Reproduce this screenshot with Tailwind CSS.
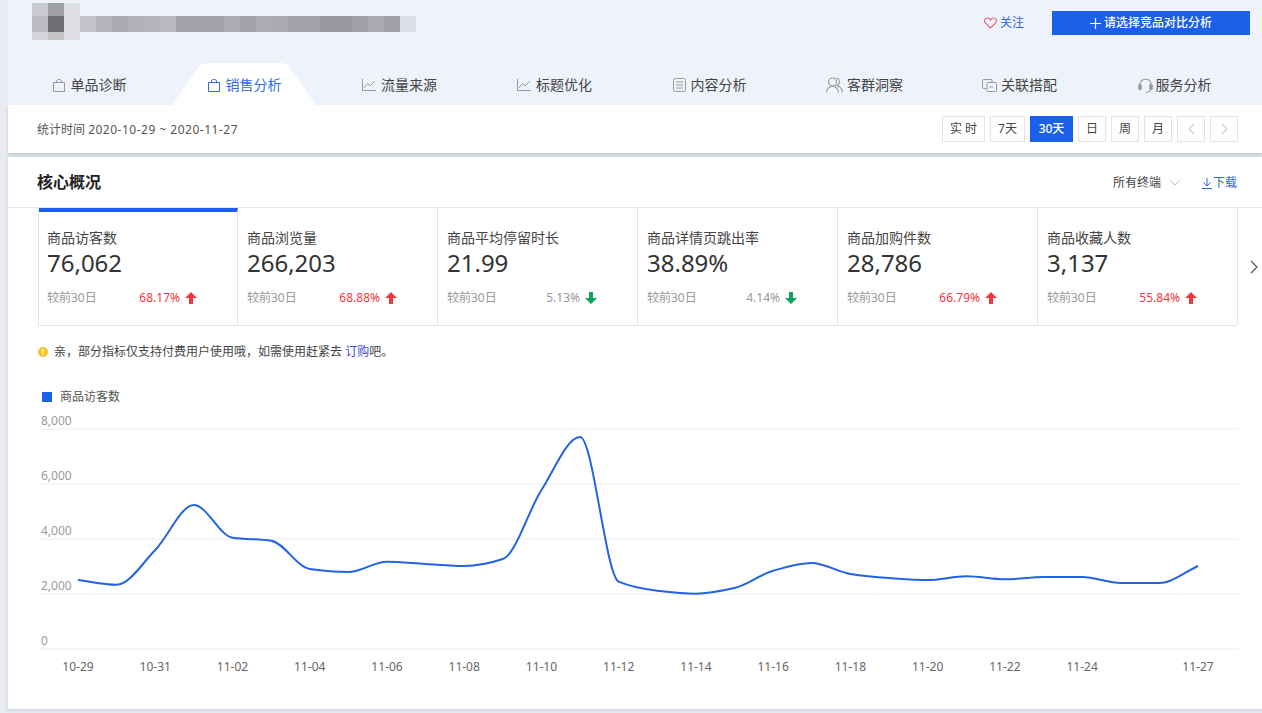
<!DOCTYPE html>
<html lang="zh-CN">
<head>
    <meta charset="UTF-8">
    <title>销售分析</title>
    <script src="https://cdn.jsdelivr.net/npm/@tailwindcss/browser@4"></script>
</head>
<body class="bg-[#e8ebf0] [font-family:'Noto_Sans','Noto_Sans_CJK_SC',sans-serif] text-[#333] text-xs">
<div class="h-[713px] w-[1262px] overflow-hidden pl-[8px]">

    <!-- header -->
    <header class="bg-[#eef3fb] h-[105px] flex flex-col">
        <div class="h-[63px] flex justify-between items-start pr-[12px]">
            <!-- blurred product name -->
            <div class="ml-[24px] mt-[3px] flex flex-col">
                <div class="flex h-[13px]">
                    <div class="w-[16px] bg-[#c9cacd]"></div><div class="w-[16px] bg-[#a0a1a4]"></div><div class="w-[16px] bg-[#dddee3]"></div>
                </div>
                <div class="flex h-[16px]">
                    <div class="w-[16px] bg-[#bbbcc0]"></div><div class="w-[16px] bg-[#6e6f74]"></div><div class="w-[16px] bg-[#dddee3]"></div>
                    <div class="w-[16px] bg-[#c1c3c7]"></div><div class="w-[16px] bg-[#b2b4b8]"></div><div class="w-[16px] bg-[#a9abaf]"></div><div class="w-[16px] bg-[#b1b3b7]"></div><div class="w-[16px] bg-[#b3b5b9]"></div><div class="w-[16px] bg-[#b7b9bd]"></div>
                    <div class="w-[48px] bg-[#a1a3a8]"></div><div class="w-[16px] bg-[#abadb1]"></div><div class="w-[16px] bg-[#a2a3a7]"></div><div class="w-[16px] bg-[#acadb1]"></div><div class="w-[16px] bg-[#a9abb0]"></div><div class="w-[32px] bg-[#a1a2a6]"></div><div class="w-[32px] bg-[#97989c]"></div><div class="w-[16px] bg-[#9fa1a5]"></div><div class="w-[16px] bg-[#a8aaae]"></div><div class="w-[16px] bg-[#a0a1a5]"></div><div class="w-[16px] bg-[#dcdfe8]"></div>
                </div>
                <div class="flex h-[8px]">
                    <div class="w-[16px] bg-[#d5d6d9]"></div><div class="w-[16px] bg-[#c2c3c5]"></div><div class="w-[16px] bg-[#dfe0e4]"></div>
                </div>
            </div>
            <div class="flex items-center mt-[11px] h-[24px]">
                <svg class="w-[13px] h-[12px] mr-[3px]" viewBox="0 0 13 12" fill="none" stroke="#ee5a7e" stroke-width="1.1"><path d="M6.5 11 L1.5 6 C-0.5 3.5 1 1 3.5 1 C5 1 6 2 6.5 3 C7 2 8 1 9.5 1 C12 1 13.5 3.5 11.5 6 Z"/></svg>
                <span class="text-[#2f66e0] mr-[28px]">关注</span>
                <button class="w-[198px] h-[24px] bg-[#1c5fe8] text-white flex items-center justify-center font-medium">
                    <svg class="w-[11px] h-[11px] mr-[3px]" viewBox="0 0 11 11" stroke="#fff" stroke-width="1.2"><path d="M5.5 0 V11 M0 5.5 H11"/></svg>
                    请选择竞品对比分析
                </button>
            </div>
        </div>

        <!-- tabs -->
        <nav class="h-[42px] ml-[4px] w-[1240px] grid grid-cols-8 text-sm text-[#444]">
            <a class="flex items-center justify-center gap-[6px] pt-[2px]">
                <svg class="w-[12px] h-[13px]" viewBox="0 0 12 13" fill="none" stroke="#999" stroke-width="1"><path d="M0.5 3.5 H11.5 V12.5 H0.5 Z M3.5 3.5 V2 C3.5 0 8.5 0 8.5 2 V3.5"/></svg>
                单品诊断
            </a>
            <a class="relative flex items-center justify-center gap-[6px] pt-[2px] text-[#2f6be6]">
                <svg class="absolute left-[4px] top-0 w-[146px] h-[42px]" viewBox="0 0 146 42" fill="#fff"><path d="M1 42 L27 5 Q30 0 38 0 H110 Q115 0 119 5 L145 42 Z"/></svg>
                <svg class="relative w-[12px] h-[13px]" viewBox="0 0 12 13" fill="none" stroke="#2f6be6" stroke-width="1"><path d="M0.5 3.5 H11.5 V12.5 H0.5 Z M3.5 3.5 V2 C3.5 0 8.5 0 8.5 2 V3.5"/></svg>
                <span class="relative">销售分析</span>
            </a>
            <a class="flex items-center justify-center gap-[5px] pt-[2px]">
                <svg class="w-[14px] h-[12px]" viewBox="0 0 14 12" fill="none" stroke="#999" stroke-width="1"><path d="M0.5 0 V11.5 H14 M2 9 L5.5 4.5 L8 7 L13 2"/></svg>
                流量来源
            </a>
            <a class="flex items-center justify-center gap-[5px] pt-[2px]">
                <svg class="w-[14px] h-[12px]" viewBox="0 0 14 12" fill="none" stroke="#999" stroke-width="1"><path d="M0.5 0 V11.5 H14 M2 9 L5.5 4.5 L8 7 L13 2"/></svg>
                标题优化
            </a>
            <a class="flex items-center justify-center gap-[5px] pt-[2px]">
                <svg class="w-[13px] h-[14px]" viewBox="0 0 13 14" fill="none" stroke="#999" stroke-width="1"><rect x="0.5" y="0.5" width="12" height="13" rx="2"/><path d="M3 4 H10 M3 7 H10 M3 10 H10"/></svg>
                内容分析
            </a>
            <a class="flex items-center justify-center gap-[4px] pt-[2px]">
                <svg class="w-[17px] h-[16px]" viewBox="0 0 17 16" fill="none" stroke="#999" stroke-width="1.1"><circle cx="6.5" cy="5" r="4"/><path d="M0.5 15.5 C1 11.5 3 9.5 6.5 9.5 C10 9.5 12 11.5 12.5 15.5"/><path d="M10.5 1.2 C14 1.2 14.5 7.5 11 8.8 C14 9.5 16 12 16.5 15.5"/></svg>
                客群洞察
            </a>
            <a class="flex items-center justify-center gap-[4px] pt-[2px]">
                <svg class="w-[15px] h-[13px]" viewBox="0 0 15 13" fill="none" stroke="#999" stroke-width="1"><path d="M4 9.5 H1.5 Q0.5 9.5 0.5 8.5 V1.5 Q0.5 0.5 1.5 0.5 H9 Q10 0.5 10 1.5 V3.5"/><rect x="5" y="3.5" width="9.5" height="9" rx="1"/><path d="M7.5 8 H11"/></svg>
                关联搭配
            </a>
            <a class="flex items-center justify-center gap-[3px] pt-[2px]">
                <svg class="w-[15px] h-[15px]" viewBox="0 0 15 15" fill="none" stroke="#999" stroke-width="1.2"><path d="M2 8 V6.5 C2 -0.5 13 -0.5 13 6.5 V8"/><rect x="0.8" y="6.5" width="2.4" height="5" rx="1" fill="#999"/><rect x="11.8" y="6.5" width="2.4" height="5" rx="1" fill="#999"/><path d="M12.5 11.5 C12 14 10 14.3 8 14.3"/></svg>
                服务分析
            </a>
        </nav>
    </header>

    <!-- date bar -->
    <div class="relative h-[48px] bg-white flex items-center justify-between pl-[29px] pr-[24px] mb-[4px] shadow-[0_2px_3px_rgba(120,130,150,0.35)]">
        <span class="text-[#555] pt-[2px]">统计时间 <span class="tracking-[0.5px]">2020-10-29 ~ 2020-11-27</span></span>
        <div class="flex gap-[5px] text-[#444] mt-[-1px]">
            <button class="h-[26px] w-[43px] border border-[#e3e3e3]">实 时</button>
            <button class="h-[26px] w-[35px] border border-[#e3e3e3]">7天</button>
            <button class="h-[26px] w-[43px] bg-[#1c5fe8] text-white font-medium">30天</button>
            <button class="h-[26px] w-[28px] border border-[#e3e3e3]">日</button>
            <button class="h-[26px] w-[28px] border border-[#e3e3e3]">周</button>
            <button class="h-[26px] w-[28px] border border-[#e3e3e3]">月</button>
            <button class="h-[26px] w-[28px] border border-[#e3e3e3] flex items-center justify-center">
                <svg class="w-[7px] h-[12px]" viewBox="0 0 7 12" fill="none" stroke="#ccc" stroke-width="1.2"><path d="M6 1 L1 6 L6 11"/></svg>
            </button>
            <button class="h-[26px] w-[28px] border border-[#e3e3e3] flex items-center justify-center">
                <svg class="w-[7px] h-[12px]" viewBox="0 0 7 12" fill="none" stroke="#ccc" stroke-width="1.2"><path d="M1 1 L6 6 L1 11"/></svg>
            </button>
        </div>
    </div>

    <!-- core overview card -->
    <section class="bg-white h-[552px] shadow-[0_1px_3px_rgba(120,130,150,0.3)]">
        <div class="h-[51px] border-b border-[#e3e7ec] flex items-center justify-between pl-[29px] pr-[25px]">
            <h2 class="text-base font-bold text-[#222]">核心概况</h2>
            <div class="flex items-center text-[#444] pt-[2px]">
                <span>所有终端</span>
                <svg class="w-[10px] h-[6px] ml-[9px]" viewBox="0 0 10 6" fill="none" stroke="#bbb" stroke-width="1"><path d="M0.5 0.5 L5 5 L9.5 0.5"/></svg>
                <svg class="w-[10px] h-[11px] ml-[22px] mr-[1px]" viewBox="0 0 10 11" fill="none" stroke="#2f66e0" stroke-width="1"><path d="M5 0 V8 M1.5 4.5 L5 8 L8.5 4.5 M0 10.5 H10"/></svg>
                <span class="text-[#2f66e0]">下载</span>
            </div>
        </div>

        <div class="flex items-center">
            <div id="kpis" class="ml-[30px] w-[1199px] h-[118px] flex border-b border-l border-[#dfe5ec]"></div>
            <svg class="w-[8px] h-[14px] ml-[13px]" viewBox="0 0 8 14" fill="none" stroke="#555" stroke-width="1.2"><path d="M1 1 L7 7 L1 13"/></svg>
        </div>

        <div class="ml-[30px] mt-[18px] h-[16px] flex items-center">
            <span class="w-[10px] h-[10px] rounded-full bg-[#f5c423] text-white text-[8px] leading-[10px] text-center font-bold mr-[6px]">!</span>
            <span class="text-[#444]">亲，部分指标仅支持付费用户使用哦，如需使用赶紧去 <a class="text-[#3b4de0]">订购</a>吧。</span>
        </div>

        <div class="ml-[34px] mt-[29px] h-[16px] flex items-center text-[#555]">
            <span class="w-[10px] h-[10px] bg-[#1c5fe8] mr-[8px] mt-[-1px]"></span>商品访客数
        </div>

        <!-- viewBox uses page coordinates -->
        <svg id="chart" class="block mt-[5px] w-[1254px] h-[270px]" viewBox="8 410 1254 270">
            <g stroke="#f4f6fb" stroke-width="2">
                <path d="M38 429 H1238 M38 484 H1238 M38 539 H1238 M38 594 H1238 M38 649 H1238"/>
            </g>
            <g fill="#9a9a9a" font-size="12">
                <text x="41" y="425">8,000</text>
                <text x="41" y="480">6,000</text>
                <text x="41" y="535">4,000</text>
                <text x="41" y="590">2,000</text>
                <text x="41" y="645">0</text>
            </g>
            <g id="xlabels" fill="#666" font-size="12" text-anchor="middle"></g>
            <path id="line" fill="none" stroke="#2263e6" stroke-width="2"/>
        </svg>
    </section>
</div>

<script>
    const kpis = [
        ['商品访客数', '76,062', '68.17%', true],
        ['商品浏览量', '266,203', '68.88%', true],
        ['商品平均停留时长', '21.99', '5.13%', false],
        ['商品详情页跳出率', '38.89%', '4.14%', false],
        ['商品加购件数', '28,786', '66.79%', true],
        ['商品收藏人数', '3,137', '55.84%', true]
    ];
    const upIcon = '<svg class="w-[12px] h-[12px] ml-[5px]" viewBox="0 0 12 12" fill="#f0393f"><path d="M6 0 L12 6 H8 V12 H4 V6 H0 Z"/></svg>';
    const downIcon = '<svg class="w-[12px] h-[12px] ml-[5px]" viewBox="0 0 12 12" fill="#0ba35a"><path d="M6 12 L12 6 H8 V0 H4 V6 H0 Z"/></svg>';

    document.getElementById('kpis').innerHTML = kpis.map((k, i) => `
        <div class="${i === 0 ? 'w-[199px] border-t-4 border-t-[#1c5fe8] pt-[18px] pl-[8px]' : 'w-[200px] pt-[22px] pl-[9px]'} shrink-0 border-r border-[#dfe5ec] pr-[40px]">
            <div class="text-sm leading-[16px] text-[#444]">${k[0]}</div>
            <div class="text-[24px] leading-[34px] text-[#333]">${k[1]}</div>
            <div class="flex justify-between items-center mt-[10px]">
                <span class="text-[#999]">较前30日</span>
                <span class="flex items-center ${k[3] ? 'text-[#f0393f]' : 'text-[#999]'}">${k[2]}${k[3] ? upIcon : downIcon}</span>
            </div>
        </div>`).join('');

    // chart data, read off in page pixels
    const ys = [580, 584.7, 550, 505, 537.7, 540.7, 569, 572, 561.7, 564, 566, 559, 490, 437, 581.7,
                590.7, 593.7, 588, 570.7, 563, 574, 578, 580, 576.3, 579.3, 577, 577, 583, 583, 566];
    const h = (1198 - 78) / 29;
    const xAt = i => 78 + i * h;

    // monotone tangents so the curve doesn't overshoot the peak or dip after it
    const slopes = ys.slice(1).map((y, i) => (y - ys[i]) / h);
    const tangent = i => {
        if (i === 0) return slopes[0];
        if (i === ys.length - 1) return slopes[i - 1];
        const a = slopes[i - 1], b = slopes[i];
        return a * b <= 0 ? 0 : 2 * a * b / (a + b);
    };
    let d = `M${xAt(0)} ${ys[0]}`;
    for (let i = 0; i < ys.length - 1; i++) {
        d += ` C${xAt(i) + h / 3} ${ys[i] + tangent(i) * h / 3} ${xAt(i + 1) - h / 3} ${ys[i + 1] - tangent(i + 1) * h / 3} ${xAt(i + 1)} ${ys[i + 1]}`;
    }
    document.getElementById('line').setAttribute('d', d);

    const labels = ['10-29', '10-31', '11-02', '11-04', '11-06', '11-08', '11-10', '11-12', '11-14', '11-16', '11-18', '11-20', '11-22', '11-24'];
    document.getElementById('xlabels').innerHTML =
        labels.map((t, i) => `<text x="${xAt(i * 2)}" y="671">${t}</text>`).join('') +
        `<text x="${xAt(29)}" y="671">11-27</text>`;
</script>
</body>
</html>
